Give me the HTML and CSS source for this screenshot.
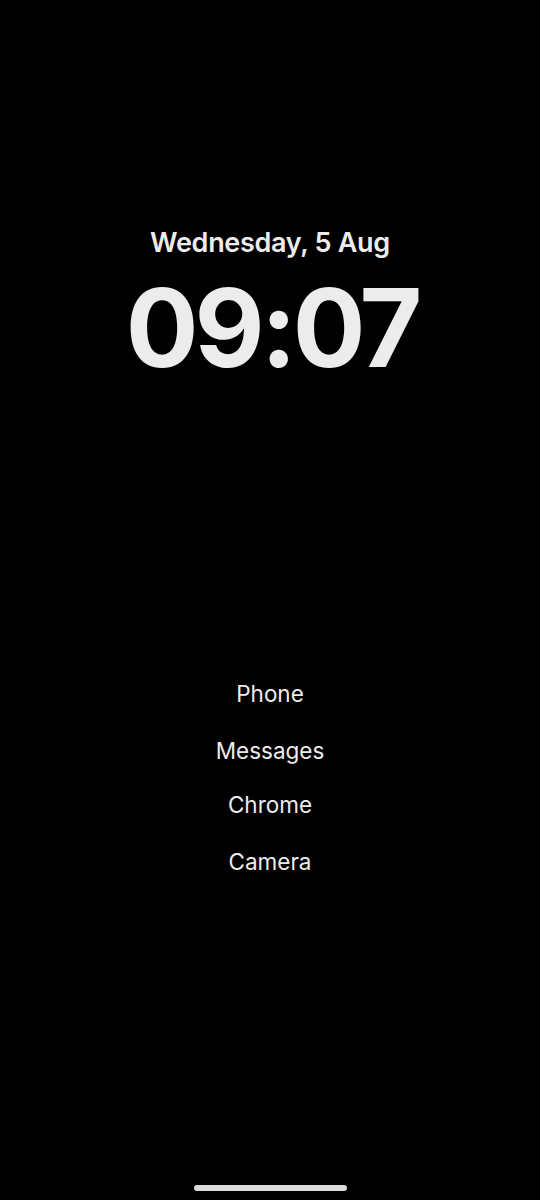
FILE: index.html
```html
<!DOCTYPE html>
<html>
<head>
<meta charset="utf-8">
<link rel="stylesheet" href="styles.css">
</head>
<body>
<div class="screen">
  <div class="clock-block">
    <div class="date">Wednesday, 5 Aug</div>
    <div class="time">09:07</div>
  </div>
  <ul class="apps">
    <li class="app app-phone">Phone</li>
    <li class="app app-messages">Messages</li>
    <li class="app app-chrome">Chrome</li>
    <li class="app app-camera">Camera</li>
  </ul>
  <div class="home-bar"></div>
</div>
</body>
</html>
```
FILE: styles.css
```css
html, body {
  margin: 0;
  padding: 0;
  background: #000;
}
.screen {
  width: 540px;
  height: 1200px;
  display: flex;
  flex-direction: column;
  align-items: center;
  color: #ececec;
  font-family: Inter, "Noto Sans", sans-serif;
}
.clock-block {
  margin-top: 226px;
  display: flex;
  flex-direction: column;
  align-items: center;
}
.date {
  font-size: 27px;
  font-weight: 600;
  line-height: 34px;
  letter-spacing: -0.3px;
}
.time {
  font-size: 108px;
  font-weight: 700;
  line-height: 100px;
  letter-spacing: -4px;
  margin-top: 18px;
  padding-left: 4px;
}
.apps {
  list-style: none;
  margin: 0;
  padding: 0;
  margin-top: 301px;
  display: flex;
  flex-direction: column;
  align-items: center;
}
.app {
  font-size: 22.5px;
  line-height: 30px;
  font-weight: 400;
}
.app-messages { margin-top: 27px; }
.app-chrome { margin-top: 24px; }
.app-camera { margin-top: 27px; }
.home-bar {
  margin-top: auto;
  margin-bottom: 9px;
  width: 153px;
  height: 6px;
  border-radius: 3px;
  background: #dcdcdc;
}
```
